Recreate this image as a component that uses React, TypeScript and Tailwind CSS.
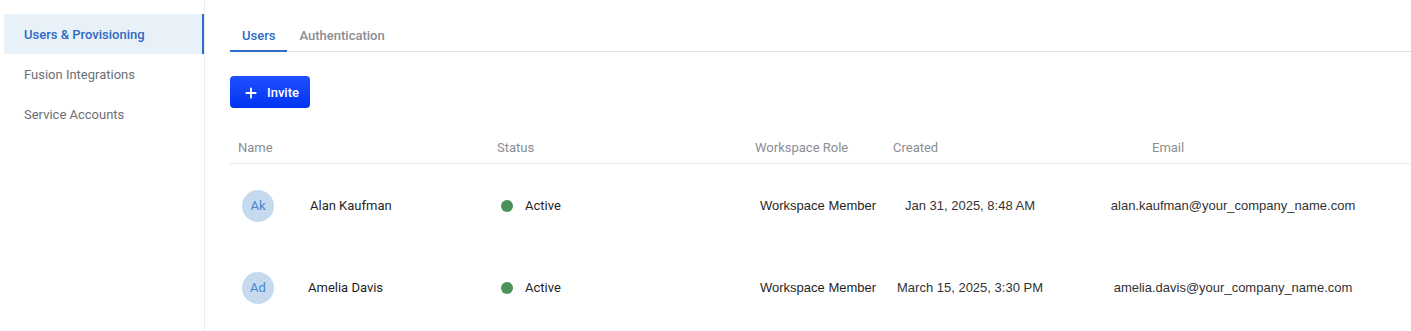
import { Plus } from "lucide-react";

const font = { fontFamily: "Roboto, 'Liberation Sans', sans-serif" };

const navItems = ["Users & Provisioning", "Fusion Integrations", "Service Accounts"];

const users = [
  {
    initials: "Ak",
    name: "Alan Kaufman",
    status: "Active",
    role: "Workspace Member",
    created: "Jan 31, 2025, 8:48 AM",
    email: "alan.kaufman@your_company_name.com",
  },
  {
    initials: "Ad",
    name: "Amelia Davis",
    status: "Active",
    role: "Workspace Member",
    created: "March 15, 2025, 3:30 PM",
    email: "amelia.davis@your_company_name.com",
  },
];

const cols = "grid grid-cols-[259px_258px_138px_170px_1fr]";

export default function App() {
  return (
    <div className="flex h-[331px] w-[1411px] bg-white" style={font}>
      {/* Sidebar */}
      <aside className="w-[205px] shrink-0 border-r border-[#ececec] pt-[14px] pl-[4px]">
        {navItems.map((item, i) => (
          <div
            key={item}
            className={
              i === 0
                ? "flex h-10 items-center border-r-2 border-[#2f6bc4] bg-[#e8f0f8] pl-5 pt-[2px] text-[13px] font-medium text-[#2f6bc4]"
                : "flex h-10 items-center pl-5 pt-[2px] text-[13px] text-[#6b6f76]"
            }
          >
            {item}
          </div>
        ))}
      </aside>

      {/* Main */}
      <main className="flex-1 pl-[25px] pt-[18px]">
        <div className="flex h-[34px] border-b border-[#e3e3e3]">
          <div className="-mb-px flex items-center border-b-2 border-[#2f6bc4] px-3 pt-[3px] text-[13px] font-medium text-[#2f6bc4]">
            Users
          </div>
          <div className="flex items-center px-3 pt-[3px] text-[13px] font-medium text-[#8a8e95]">
            Authentication
          </div>
        </div>

        <button className="mt-[24px] flex h-8 w-20 items-center gap-[8px] rounded-[4px] bg-gradient-to-b from-[#1f50ff] to-[#0033f0] pl-[13px] pt-[1px] text-[13px] font-medium text-white">
          <Plus className="h-4 w-4" strokeWidth={2.75} />
          Invite
        </button>

        <div className="mt-[24px]">
          <div className={`${cols} h-[32px] items-center border-b border-[#e8e8e8] pt-[1px] text-[13px] text-[#8a8e95]`}>
            <div className="pl-2">Name</div>
            <div className="pl-2">Status</div>
            <div className="pl-2">Workspace Role</div>
            <div className="pl-2">Created</div>
            <div className="pl-[97px]">Email</div>
          </div>

          {users.map((u, i) => (
            <div key={u.name} className={`${cols} h-[82px] items-center pt-[2px] text-[13px] text-[#1f1f1f]`}>
              <div className="flex items-center pl-3">
                <div className="flex h-8 w-8 items-center justify-center rounded-full bg-[#c5d9ef] text-[13px] text-[#4a86cc]">
                  {u.initials}
                </div>
                <span className={i === 0 ? "ml-[36px]" : "ml-[34px]"}>{u.name}</span>
              </div>
              <div className="flex items-center pl-3">
                <span className="h-3 w-3 rounded-full bg-[#4b9259]" />
                <span className="ml-3">{u.status}</span>
              </div>
              <div className="pl-[13px] font-['Liberation_Sans_Narrow','Liberation_Sans',sans-serif] text-[13px]">
                {u.role}
              </div>
              <div className="text-center font-['Liberation_Sans_Narrow','Liberation_Sans',sans-serif] text-[13px] text-[#333]">
                {u.created}
              </div>
              <div className="text-center font-['Liberation_Sans_Narrow','Liberation_Sans',sans-serif] text-[13px] text-[#333]">
                {u.email}
              </div>
            </div>
          ))}
        </div>
      </main>
    </div>
  );
}
